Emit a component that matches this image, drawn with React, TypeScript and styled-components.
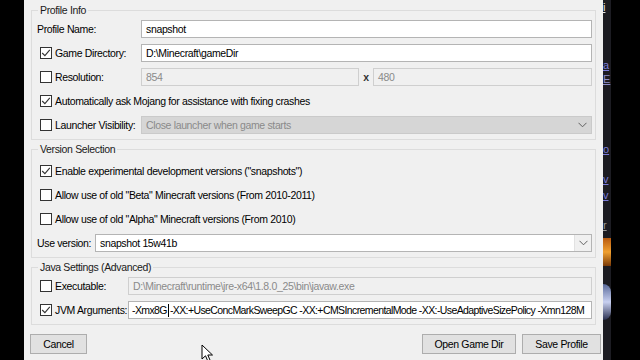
import React, { FC } from 'react'
import styled, { createGlobalStyle } from 'styled-components'

const GlobalStyle = createGlobalStyle`
	html, body {
		margin: 0;
		padding: 0;
		background: #000;
		overflow: hidden;
	}
	* {
		box-sizing: border-box;
	}
`

const Check: FC<{ on?: boolean }> = ({ on }) => (
	<Box>
		{on && (
			<svg width="10" height="10" viewBox="0 0 10 10">
				<path d="M1.2 5 L3.9 7.7 L8.8 1.9" fill="none" stroke="#333" strokeWidth="1.1" />
			</svg>
		)}
	</Box>
)

const Chevron: FC = () => (
	<svg width="9" height="6" viewBox="0 0 9 6">
		<path d="M0.5 0.8 L4.5 4.8 L8.5 0.8" fill="none" stroke="#606060" strokeWidth="1" />
	</svg>
)

const App: FC = () => {
	return (
		<Screen>
			<GlobalStyle />
			<Gap />
			<Dialog>
				<Group>
					<Legend>Profile Info</Legend>
					<Grid $label={105}>
						<Label>Profile Name:</Label>
						<Input>snapshot</Input>

						<CheckLabel>
							<Check on />
							Game Directory:
						</CheckLabel>
						<Input>D:\Minecraft\gameDir</Input>

						<CheckLabel>
							<Check />
							Resolution:
						</CheckLabel>
						<Pair>
							<Input $disabled $w={218}>854</Input>
							<Times>x</Times>
							<Input $disabled>480</Input>
						</Pair>

						<Wide>
							<CheckLabel>
								<Check on />
								Automatically ask Mojang for assistance with fixing crashes
							</CheckLabel>
						</Wide>

						<CheckLabel>
							<Check />
							Launcher Visibility:
						</CheckLabel>
						<Combo $disabled>
							<span>Close launcher when game starts</span>
							<Chevron />
						</Combo>
					</Grid>
				</Group>

				<Group $top={6}>
					<Legend>Version Selection</Legend>
					<Grid $label={59}>
						<Wide>
							<CheckLabel>
								<Check on />
								Enable experimental development versions ("snapshots")
							</CheckLabel>
						</Wide>
						<Wide>
							<CheckLabel>
								<Check />
								Allow use of old "Beta" Minecraft versions (From 2010-2011)
							</CheckLabel>
						</Wide>
						<Wide>
							<CheckLabel>
								<Check />
								Allow use of old "Alpha" Minecraft versions (From 2010)
							</CheckLabel>
						</Wide>
						<Label>Use version:</Label>
						<Combo>
							<span>snapshot 15w41b</span>
							<DropButton>
								<Chevron />
							</DropButton>
						</Combo>
					</Grid>
				</Group>

				<Group>
					<Legend>Java Settings (Advanced)</Legend>
					<Grid $label={92}>
						<CheckLabel>
							<Check />
							Executable:
						</CheckLabel>
						<Input $disabled>D:\Minecraft\runtime\jre-x64\1.8.0_25\bin\javaw.exe</Input>

						<CheckLabel>
							<Check on />
							JVM Arguments:
						</CheckLabel>
						<Input $tight>
							-Xmx8G
							<Caret />
							-XX:+UseConcMarkSweepGC -XX:+CMSIncrementalMode -XX:-UseAdaptiveSizePolicy -Xmn128M
						</Input>
					</Grid>
				</Group>

				<Buttons>
					<Button $w={57}>Cancel</Button>
					<Spacer />
					<Button $w={94}>Open Game Dir</Button>
					<Button $w={79}>Save Profile</Button>
				</Buttons>

				<Cursor width="13" height="20" viewBox="0 0 13 20">
					<path
						d="M1 1 L1 15 L4.5 11.8 L7 17.5 L9.2 16.5 L6.8 11 L11.5 11 Z"
						fill="#fff"
						stroke="#000"
						strokeWidth="1"
						strokeLinejoin="round"
					/>
				</Cursor>
			</Dialog>
			<Behind>
				<Frag $c="#e8e8e8" $t={0}>i</Frag>
				<Frag $c="#7b7bd8" $t={44}>a</Frag>
				<Frag $c="#8c8cc8" $t={0}>E</Frag>
				<Frag $c="#7b7bd8" $t={56}>o</Frag>
				<Frag $c="#7b7bd8" $t={16}>v</Frag>
				<Frag $c="#7b7bd8" $t={2}>v</Frag>
				<Frag $c="#9a9a9a" $t={16}>r</Frag>
				<Fire />
				<Figure />
			</Behind>
		</Screen>
	)
}

export default App

const Screen = styled.div`
	position: relative;
	display: flex;
	width: 640px;
	height: 360px;
	background: #000;
	font-family: 'Liberation Sans', Arial, sans-serif;
	font-size: 10.5px;
	letter-spacing: -0.35px;
	color: #000;
`

const Gap = styled.div`
	width: 24px;
	flex: none;
`

const Dialog = styled.div`
	width: 579px;
	flex: none;
	background: #f0f0f0;
	padding: 4px 7px 0 7px;
	display: flex;
	flex-direction: column;
	gap: 3px;
`

const Group = styled.fieldset<{ $top?: number }>`
	margin: 0;
	padding: ${({ $top }) => $top ?? 3}px 3px 5px 4px;
	border: 1px solid #dcdcdc;
	min-width: 0;
`

const Legend = styled.legend`
	padding: 0 2px;
	margin-left: 2px;
	line-height: 13px;
	color: #1a1a1a;
`

const Grid = styled.div<{ $label: number }>`
	display: grid;
	grid-template-columns: ${({ $label }) => $label}px 1fr;
	grid-auto-rows: 18px;
	row-gap: 6px;
	align-items: center;
`

const Wide = styled.div`
	grid-column: 1 / -1;
	display: flex;
	align-items: center;
`

const Label = styled.div`
	padding-left: 1px;
	white-space: nowrap;
`

const CheckLabel = styled.label`
	display: flex;
	align-items: center;
	gap: 3px;
	padding-left: 4px;
	white-space: nowrap;
`

const Box = styled.span`
	width: 12px;
	height: 12px;
	flex: none;
	border: 1px solid #333;
	background: #fff;
	display: flex;
	align-items: center;
	justify-content: center;
`

const Input = styled.div<{ $disabled?: boolean; $w?: number; $tight?: boolean }>`
	height: 18px;
	${({ $w }) => ($w ? `width: ${$w}px; flex: none;` : 'flex: 1;')}
	min-width: 0;
	border: 1px solid ${({ $disabled }) => ($disabled ? '#cfcfcf' : '#b4b4b4')};
	background: ${({ $disabled }) => ($disabled ? '#f0f0f0' : '#fff')};
	color: ${({ $disabled }) => ($disabled ? '#8a8a8a' : '#000')};
	padding: 0 ${({ $tight }) => ($tight ? 3 : 4)}px;
	letter-spacing: ${({ $tight }) => ($tight ? '-0.6px' : 'inherit')};
	line-height: 16px;
	white-space: nowrap;
	overflow: hidden;
	display: flex;
	align-items: center;
`

const Caret = styled.span`
	width: 1px;
	height: 13px;
	background: #000;
	margin: 0 1px;
	flex: none;
`

const Pair = styled.div`
	display: flex;
	align-items: center;
	gap: 0;
`

const Times = styled.span`
	width: 14px;
	text-align: center;
	font-weight: bold;
	color: #333;
`

const Combo = styled.div<{ $disabled?: boolean }>`
	height: 18px;
	border: 1px solid ${({ $disabled }) => ($disabled ? '#cacaca' : '#b4b4b4')};
	background: ${({ $disabled }) => ($disabled ? '#d6d6d6' : '#fff')};
	color: ${({ $disabled }) => ($disabled ? '#8a8a8a' : '#000')};
	display: flex;
	align-items: center;
	justify-content: space-between;
	padding-left: 4px;
	padding-right: ${({ $disabled }) => ($disabled ? '4px' : '0')};
	white-space: nowrap;
`

const DropButton = styled.div`
	width: 17px;
	height: 100%;
	background: #f0f0f0;
	border-left: 1px solid #e2e2e2;
	display: flex;
	align-items: center;
	justify-content: center;
`

const Buttons = styled.div`
	display: flex;
	gap: 6px;
	margin: 6px -5px 0 -1px;
`

const Spacer = styled.div`
	flex: 1;
`

const Button = styled.button<{ $w: number }>`
	width: ${({ $w }) => $w}px;
	height: 20px;
	border: 1px solid #adadad;
	background: #e1e1e1;
	font: inherit;
	letter-spacing: inherit;
	color: #000;
	padding: 0;
`

const Cursor = styled.svg`
	position: absolute;
	left: 201px;
	top: 344px;
`

const Behind = styled.div`
	width: 8px;
	flex: none;
	background: #1c1c22;
	overflow: hidden;
	display: flex;
	flex-direction: column;
	font-size: 11px;
	letter-spacing: 0;
	line-height: 14px;
`

const Frag = styled.span<{ $c: string; $t: number }>`
	margin-top: ${({ $t }) => $t}px;
	color: ${({ $c }) => $c};
	white-space: nowrap;
	text-decoration: underline;
`

const Fire = styled.div`
	margin-top: 6px;
	height: 28px;
	background: linear-gradient(180deg, #b85a10, #f0a030 50%, #7a3a08);
`

const Figure = styled.div`
	margin-top: 18px;
	height: 36px;
	background: linear-gradient(180deg, #5a6a9a, #c8d0f0 50%, #2a3050);
	border-radius: 0 8px 8px 0;
`
